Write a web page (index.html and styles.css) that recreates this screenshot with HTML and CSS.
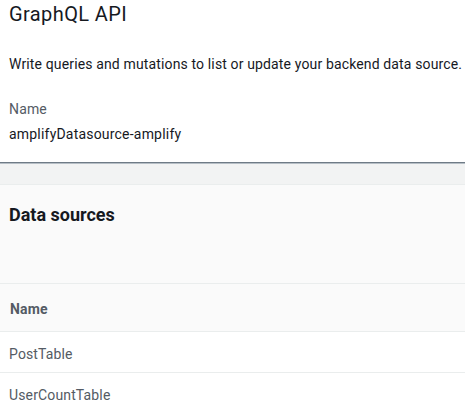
FILE: index.html
```html
<!DOCTYPE html>
<html>
<head>
<meta charset="utf-8">
<link rel="stylesheet" href="styles.css">
</head>
<body>
<section class="top">
  <h1 class="title">GraphQL API</h1>
  <p class="desc">Write queries and mutations to list or update your backend data source.</p>
  <div class="field">
    <div class="label">Name</div>
    <div class="value">amplifyDatasource-amplify</div>
  </div>
</section>
<div class="band"></div>
<section class="sources">
  <h2 class="heading">Data sources</h2>
  <div class="table">
    <div class="th">Name</div>
    <div class="td">PostTable</div>
    <div class="td">UserCountTable</div>
  </div>
</section>
</body>
</html>
```
FILE: styles.css
```css
html, body {
  margin: 0;
  padding: 0;
  background: #fafafa;
  font-family: Roboto, "Noto Sans", sans-serif;
  color: #16191f;
  overflow: hidden;
}
.top {
  background: #ffffff;
  padding: 0 9px;
  height: 163px;
  box-sizing: border-box;
  border-bottom: 1px solid #6f7b86;
}
.title {
  margin: 0;
  font-size: 20px;
  font-weight: 400;
  line-height: 28px;
  letter-spacing: 0.4px;
}
.desc {
  margin: 26px 0 0;
  font-size: 14px;
  line-height: 20px;
  letter-spacing: 0.14px;
  white-space: nowrap;
}
.field {
  margin-top: 25px;
}
.label {
  font-size: 14px;
  line-height: 20px;
  letter-spacing: 0.14px;
  color: #545b64;
}
.value {
  margin-top: 5px;
  font-size: 14px;
  line-height: 20px;
  letter-spacing: 0.2px;
}
.band {
  height: 20px;
  background: #f2f3f3;
  border-top: 1px solid #b6bec5;
  border-bottom: 1px solid #eaeded;
}
.sources {
  background: #fafafa;
  padding-top: 17px;
}
.heading {
  margin: 0;
  padding: 0 9px;
  font-size: 18px;
  font-weight: 700;
  line-height: 26px;
}
.table {
  margin-top: 55px;
}
.th {
  border-top: 1px solid #eaeded;
  border-bottom: 1px solid #eaeded;
  padding: 15px 10px 12px;
  font-size: 14px;
  line-height: 20px;
  font-weight: 700;
  letter-spacing: 0.14px;
  color: #545b64;
}
.td {
  background: #ffffff;
  border-bottom: 1px solid #eaeded;
  padding: 12px 9px 8px;
  font-size: 14px;
  line-height: 20px;
  letter-spacing: 0.14px;
  color: #545b64;
}
```
